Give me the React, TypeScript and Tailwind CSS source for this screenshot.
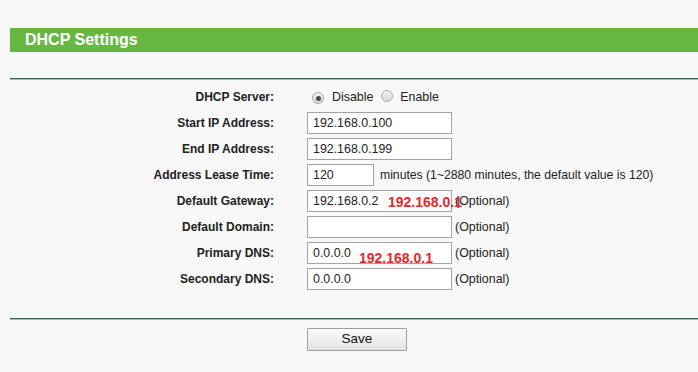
import React from 'react'

const font = { fontFamily: '"Liberation Sans", Arial, sans-serif' }

// Radio button, drawn like the old IE / Windows style
const Radio = ({ checked }: { checked?: boolean }) => (
  <span className="inline-flex items-center justify-center w-[12px] h-[12px] rounded-full border border-[#a9a9a9] bg-gradient-to-b from-[#f4f4f4] to-[#d6d6d6] mt-[3px]">
    {checked && <span className="block w-[5px] h-[5px] rounded-full bg-[#4a4a4a]" />}
  </span>
)

const Field = ({ value = '', width = 'w-[145px]' }: { value?: string; width?: string }) => (
  <div className={`${width} h-[22px] border border-[#a3a3a3] bg-white flex items-center pl-[5px] text-[12.4px] text-[#222]`}>
    {value}
  </div>
)

const Row = ({ label, children }: { label: string; children: React.ReactNode }) => (
  <div className="flex items-center h-[26px]">
    <div className="w-[264px] text-right text-[12px] font-bold text-[#222]">{label}</div>
    <div className="ml-[33px] flex items-center relative">{children}</div>
  </div>
)

const Optional = () => <span className="ml-[3px] text-[12.4px] text-[#222]">(Optional)</span>

// red annotation that lies over the form in the screenshot
const RedNote = ({ className }: { className: string }) => (
  <span className={`absolute text-[14px] font-bold text-[#e3282c] leading-none ${className}`}>192.168.0.1</span>
)

export default function App() {
  return (
    <div className="w-[698px] h-[372px] bg-[#f8f8f8] pl-[10px] pt-[28px] overflow-hidden" style={font}>
      <div className="h-[24px] bg-[#66b843] flex items-center pl-[15px]">
        <span className="text-white font-bold text-[16px]">DHCP Settings</span>
      </div>

      <div className="mt-[26px] h-[1px] bg-[#2d6b4b]" />
      <div className="h-[1px] bg-[#9cc2ab]" />

      <div className="mt-[4px]">
        <Row label="DHCP Server:">
          <div className="flex items-center text-[12.4px] text-[#222]">
            <span className="ml-[5px]"><Radio checked /></span>
            <span className="ml-[8px]">Disable</span>
            <span className="ml-[8px]"><Radio /></span>
            <span className="ml-[7px]">Enable</span>
          </div>
        </Row>
        <Row label="Start IP Address:">
          <Field value="192.168.0.100" />
        </Row>
        <Row label="End IP Address:">
          <Field value="192.168.0.199" />
        </Row>
        <Row label="Address Lease Time:">
          <Field value="120" width="w-[67px]" />
          <span className="ml-[6px] text-[12.2px] text-[#222]">minutes (1~2880 minutes, the default value is 120)</span>
        </Row>
        <Row label="Default Gateway:">
          <Field value="192.168.0.2" />
          <Optional />
          <RedNote className="left-[81px] top-[5px]" />
        </Row>
        <Row label="Default Domain:">
          <Field />
          <Optional />
        </Row>
        <Row label="Primary DNS:">
          <Field value="0.0.0.0" />
          <Optional />
          <RedNote className="left-[52px] top-[9px]" />
        </Row>
        <Row label="Secondary DNS:">
          <Field value="0.0.0.0" />
          <Optional />
        </Row>
      </div>

      <div className="mt-[26px] h-[1px] bg-[#2d6b4b]" />
      <div className="h-[1px] bg-[#9cc2ab]" />

      <div className="mt-[6px] pl-[297px]">
        <button className="w-[100px] h-[23px] border border-[#a0a0a0] bg-gradient-to-b from-[#fbfbfb] to-[#e3e3e3] text-[13.5px] text-[#111] rounded-[1px]">
          Save
        </button>
      </div>
    </div>
  )
}
